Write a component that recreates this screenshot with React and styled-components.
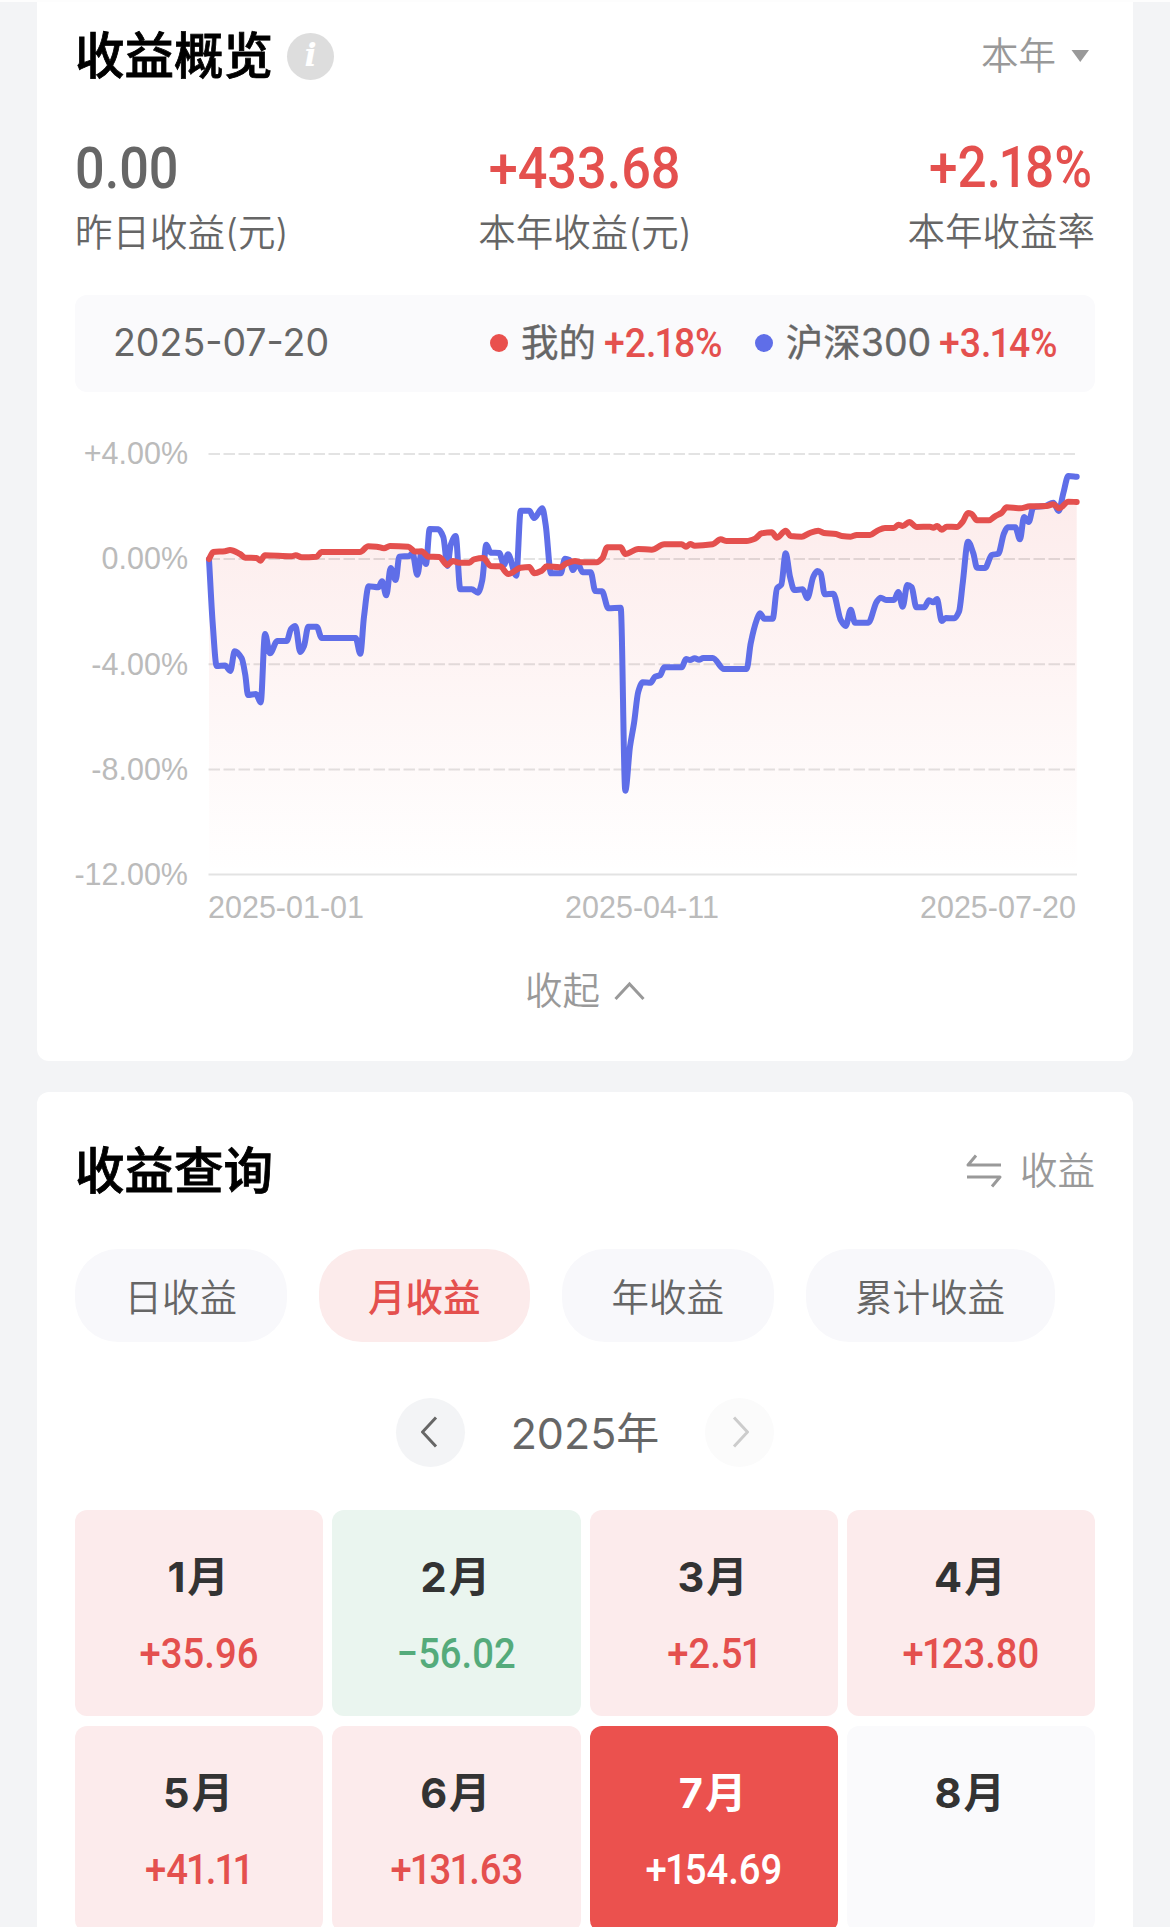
import React, { useState } from 'react'
import styled, { createGlobalStyle } from 'styled-components'

const RED = '#e4504e'
const BLUE = '#5f6ee8'
const GREEN = '#55ab7b'

const GlobalStyle = createGlobalStyle`
  * { box-sizing: border-box; }
  body {
    margin: 0;
    background: #f3f4f6;
    font-family: Inter, "Noto Sans CJK SC", sans-serif;
    color: #666;
  }
  button {
    border: 0;
    padding: 0;
    background: none;
    font: inherit;
    color: inherit;
  }
`

const Page = styled.div`
  width: 1170px;
  height: 1927px;
  overflow: hidden;
  border-top: 2px solid #fdfdfd;
  padding: 0 37px;
`

const Card = styled.section`
  background: #fff;
  padding: 0 38px;
  border-radius: ${({ $first }) => ($first ? '0 0 12px 12px' : '12px')};
  height: ${({ $first }) => ($first ? '1059px' : '900px')};
  margin-bottom: 31px;
`

const CardHeader = styled.header`
  display: flex;
  align-items: center;
  justify-content: space-between;
  height: ${({ $height }) => $height}px;
`

const Title = styled.h2`
  display: flex;
  align-items: center;
  gap: 14px;
  margin: 0;
  font-size: 49.5px;
  line-height: 60px;
  font-weight: 500;
  color: #000;
  -webkit-text-stroke: 0.8px #000;
`

const InfoBadge = styled.span`
  width: 47px;
  height: 47px;
  border-radius: 50%;
  background: #ddd;
  color: #fff;
  -webkit-text-stroke: 0;
  font: italic bold 32px/45px "DejaVu Serif", serif;
  text-align: center;
`

const HeaderAction = styled.button`
  display: flex;
  align-items: center;
  gap: ${({ $gap }) => $gap}px;
  font-size: 37.5px;
  line-height: 46px;
  font-weight: 350;
  color: #999;
`

const Stats = styled.div`
  display: grid;
  grid-template-columns: repeat(3, 1fr);
  padding-top: 28px;
`

const Stat = styled.div`
  display: flex;
  flex-direction: column;
  align-items: ${({ $align }) => $align};
`

const Digits = styled.span`
  display: inline-block;
  font-family: Roboto, sans-serif;
  font-weight: 500;
  font-size: ${({ $size }) => $size}px;
  line-height: ${({ $size }) => $size + 2}px;
  color: ${({ $color }) => $color};
  transform: scaleX(0.9);
  transform-origin: ${({ $origin = 'center' }) => $origin};
`

const RateDigits = styled(Digits)`
  margin-right: 3px;
`

const LegendDigits = styled(Digits)`
  margin-right: -13px;
`

const One = styled.span`
  margin: 0 -0.05em;
`

const StatLabel = styled.span`
  margin-top: 12px;
  font-size: 37.5px;
  line-height: 46px;
  font-weight: 350;
`

const Legend = styled.div`
  display: flex;
  align-items: center;
  margin-top: 39px;
  height: 97px;
  padding: 0 37px 2px 38px;
  border-radius: 12px;
  background: #fafafc;
  font-size: 37.5px;
  line-height: 46px;
`

const LegendDate = styled.span`
  flex: 1;
`

const LegendItem = styled.span`
  display: flex;
  align-items: center;
  margin-left: 32px;
`

const Dot = styled.i`
  width: 18px;
  height: 18px;
  margin-right: 13px;
  border-radius: 50%;
  background: ${({ $color }) => $color};
`

const LegendName = styled.span`
  margin-right: 8px;
  -webkit-text-stroke: 0.3px #666;
`

const Chart = styled.div`
  display: grid;
  grid-template-columns: 113px 868px;
  column-gap: 20px;
  margin-top: 47px;
  font: 30.5px/30px "Liberation Sans", Arial, sans-serif;
  color: #bbb;
`

const YAxis = styled.div`
  display: flex;
  flex-direction: column;
  justify-content: space-between;
  align-items: flex-end;
  height: 451px;
  margin-top: -1px;
`

const XAxis = styled.div`
  grid-column: 2;
  display: flex;
  justify-content: space-between;
  margin-top: 2px;
`

const Plot = styled.svg`
  display: block;
  overflow: visible;
`

const Collapse = styled.button`
  display: flex;
  align-items: center;
  gap: 14px;
  margin: 46px auto 0;
  font-size: 37.5px;
  line-height: 46px;
  font-weight: 350;
  color: #999;
`

const Tabs = styled.div`
  display: flex;
  gap: 32px;
`

const Tab = styled.button`
  height: 93px;
  padding: 0 49.5px 3px;
  border-radius: 43px;
  font-size: 37.5px;
  font-weight: ${({ $active }) => ($active ? 500 : 350)};
  color: ${({ $active }) => ($active ? RED : '#666')};
  background: ${({ $active }) => ($active ? '#fcebeb' : '#f8f8fb')};
`

const YearNav = styled.div`
  display: flex;
  align-items: center;
  justify-content: center;
  gap: 46px;
  margin-top: 55px;
  height: 70px;
  font-size: 43px;
`

const Year = styled.span`
  padding-bottom: 5px;
`

const YearButton = styled.button`
  display: flex;
  align-items: center;
  justify-content: center;
  width: 69px;
  height: 69px;
  border-radius: 50%;
  color: ${({ disabled }) => (disabled ? '#ccc' : '#666')};
  background: ${({ disabled }) => (disabled ? '#fbfbfb' : '#f3f4f6')};
`

const Months = styled.div`
  display: grid;
  grid-template-columns: repeat(4, 1fr);
  gap: 10px 9px;
  margin-top: 43px;
`

const tones = {
  up: { bg: '#fcebec', title: '#333', value: RED },
  down: { bg: '#eaf5ef', title: '#333', value: GREEN },
  current: { bg: '#eb514e', title: '#fff', value: '#fff' },
  none: { bg: '#fafafc', title: '#333', value: '#333' },
}

const MonthCell = styled.div`
  display: flex;
  flex-direction: column;
  align-items: center;
  height: 206px;
  padding-top: 41px;
  border-radius: 12px;
  background: ${({ $tone }) => tones[$tone].bg};
`

const MonthName = styled.span`
  margin-bottom: 28px;
  font-size: 41.5px;
  line-height: 53px;
  letter-spacing: 2px;
  font-weight: 700;
  color: ${({ $tone }) => tones[$tone].title};
`

const redLine = [
  [209, 559], [213.3, 552], [225, 551.3], [230, 550], [240, 554], [245.3, 557.7], [256.7, 558], [260.3, 560.7],
  [265, 555.3], [291.7, 556.3], [295.7, 555.3], [301.7, 557.3], [316.7, 556.7], [321.3, 552], [360, 552],
  [368.3, 546.3], [376.7, 546.7], [384, 548.3], [390, 546], [408.3, 546.7], [415, 551.5], [421.7, 551.3],
  [428.3, 556.7], [439.3, 557], [447.3, 565], [452.7, 561], [459.3, 562.7], [469.3, 562.7], [474, 559.3],
  [483.3, 558], [490.7, 566], [500, 566.3], [508.3, 574], [520.7, 567.7], [529.3, 567], [534.3, 573.3],
  [541.7, 570.7], [546.7, 566.3], [560, 567.3], [566.7, 563.3], [575, 561], [581.7, 562.3], [596.7, 562.3],
  [602.3, 558.3], [607.3, 547.3], [620.7, 547.3], [625.3, 554], [638.3, 549], [651.7, 549.7], [664.3, 544.3],
  [681.7, 544.3], [686, 546.7], [690.3, 544], [694.7, 545.7], [712.7, 544.3], [720.7, 539.3], [726.7, 541],
  [746.7, 541], [755, 538.7], [761.7, 533.3], [771.7, 532.3], [777, 537.7], [785.7, 530.7], [790.7, 536],
  [801.7, 536.7], [809, 533.3], [818.3, 530.7], [824, 533], [836, 534], [841.7, 536], [850.7, 536.7],
  [856.7, 535], [870, 535], [877.3, 530.7], [885, 528], [894, 528], [898.3, 524.7], [902.7, 526], [909.3, 522],
  [916.7, 527], [930, 526.7], [933.3, 527.7], [937.3, 526], [941.7, 529.7], [946.7, 526.7], [956.7, 527],
  [962.7, 521.7], [968, 513], [971.7, 514], [977, 520.3], [989, 520.3], [995, 516.3], [1001.7, 512.7],
  [1006.7, 507.3], [1020, 508.3], [1030, 506.3], [1046.7, 506], [1053.3, 504.3], [1059.3, 508.3],
  [1068.3, 501.7], [1076.7, 502],
]

const blueLine = [
  [209, 559.3], [212.7, 623.3], [216.7, 666], [225, 665.5], [230.3, 671], [234.7, 651.3], [241.7, 658.3],
  [245.3, 675], [248, 695], [256, 694], [260.7, 702.5], [265, 634], [270, 653.3], [277.3, 641], [286.7, 641],
  [291, 629], [295.3, 626], [300.3, 652], [304, 646], [308.3, 626.7], [316.7, 626.7], [321.7, 638], [355.7, 638],
  [360.3, 653.7], [364, 616.7], [368.7, 586.3], [378.3, 587.3], [382, 581.3], [386.3, 595.3], [390.7, 568],
  [395.7, 580], [399.3, 556.7], [409.3, 556], [412.5, 553], [417.3, 574.7], [421.7, 552], [426, 564],
  [429.7, 529], [438.3, 529.3], [443.3, 537], [447.5, 566], [450.7, 545], [455.7, 536], [460.3, 589.3],
  [471.7, 589.3], [478, 592.7], [482.3, 580], [486.3, 544.7], [490.7, 552.7], [499.3, 553], [504, 565],
  [508, 554.3], [516.3, 575.7], [520.7, 510.7], [529.3, 510.7], [534, 518], [542.3, 508.3], [545.7, 525],
  [551, 573.3], [560.7, 573.3], [565, 558.7], [569.3, 560], [573, 570], [577.3, 562.7], [582.7, 572.3],
  [590.7, 572.3], [595.3, 591], [602, 591.3], [608.3, 608.3], [620.7, 607.7], [625.3, 790.7], [630, 746.7],
  [634, 723.3], [638.3, 691.7], [642.7, 682.3], [650.7, 682.7], [655, 676.7], [660, 675.3], [664.3, 667.3],
  [681.7, 667.3], [686, 659], [690, 660], [694.7, 658.3], [699, 659.7], [703.3, 658], [712.7, 658], [724, 669],
  [746.7, 669], [750.7, 643.3], [756.7, 620], [760, 613.3], [764.3, 618.7], [772.7, 618.7], [777, 588.3],
  [781.3, 584.7], [785.7, 553.3], [790, 576.7], [794.3, 590], [802.7, 589.3], [807.3, 598.3], [813.3, 576.7],
  [817.3, 571], [820.7, 573.3], [824.7, 594.3], [833.3, 593.7], [840.7, 620], [845.7, 626], [850.7, 609.7],
  [855, 622.7], [868.3, 622.7], [876.7, 601.7], [880.7, 597.7], [886, 600], [894, 600], [898.3, 592],
  [902.7, 606.7], [907.3, 585], [911.7, 587.3], [916.3, 607.3], [924.3, 607.3], [929, 600.3], [933.3, 602.3],
  [937, 599], [941.7, 621], [945.7, 618], [954.3, 618.3], [959, 611.7], [962.7, 583.3], [968, 541.7],
  [973.3, 553.3], [977, 567.7], [985, 568], [991.7, 555], [998.3, 553.7], [1004, 533.3], [1007.7, 527.3],
  [1015.3, 527.3], [1020, 539.3], [1024, 517], [1028.7, 522], [1033.3, 507.3], [1045, 506], [1053.3, 502.7],
  [1058.7, 511], [1063.3, 493.3], [1068.3, 476], [1076.7, 476.7],
]

// monotone cubic through the points, so flat runs stay flat
function smooth(points) {
  const n = points.length
  const slope = points.slice(1).map(([x, y], i) => (y - points[i][1]) / (x - points[i][0]))
  const tangent = points.map((p, i) => {
    if (i === 0) return slope[0]
    if (i === n - 1) return slope[n - 2]
    const a = slope[i - 1]
    const b = slope[i]
    return a * b <= 0 ? 0 : (2 * a * b) / (a + b)
  })
  let d = `M${points[0][0]},${points[0][1]}`
  for (let i = 1; i < n; i++) {
    const [x0, y0] = points[i - 1]
    const [x1, y1] = points[i]
    const h = (x1 - x0) / 3
    d += `C${x0 + h},${y0 + tangent[i - 1] * h} ${x1 - h},${y1 - tangent[i] * h} ${x1},${y1}`
  }
  return d
}

// the 1 takes less room than the other digits
function narrowOnes(text) {
  return text.split('').map((c, i) => (c === '1' ? <One key={i}>1</One> : c))
}

function ProfitChart() {
  const red = smooth(redLine)
  return (
    <Chart>
      <YAxis>
        {['+4.00%', '0.00%', '-4.00%', '-8.00%', '-12.00%'].map(t => <span key={t}>{t}</span>)}
      </YAxis>
      <Plot width="868" height="451" viewBox="208 439 868 451">
        <defs>
          <linearGradient id="fade" gradientUnits="userSpaceOnUse" x1="0" y1="500" x2="0" y2="875">
            <stop offset="0" stopColor="#eb514e" stopOpacity="0.11" />
            <stop offset="0.5" stopColor="#eb514e" stopOpacity="0.055" />
            <stop offset="1" stopColor="#eb514e" stopOpacity="0" />
          </linearGradient>
        </defs>
        <path d={`${red}V875H209Z`} fill="url(#fade)" />
        <g stroke="#000" strokeOpacity="0.11" strokeWidth="2">
          {[454, 559, 664.3, 769.5].map(y => (
            <line key={y} x1="208.5" x2="1077" y1={y} y2={y} strokeDasharray="11.5 3.5" />
          ))}
          <line x1="208.5" x2="1077" y1="874.5" y2="874.5" />
        </g>
        <g fill="none" strokeWidth="6" strokeLinecap="round" strokeLinejoin="round">
          <path d={smooth(blueLine)} stroke={BLUE} />
          <path d={red} stroke={RED} />
        </g>
      </Plot>
      <XAxis>
        <span>2025-01-01</span>
        <span>2025-04-11</span>
        <span>2025-07-20</span>
      </XAxis>
    </Chart>
  )
}

const months = [
  { name: '1月', value: '+35.96', tone: 'up' },
  { name: '2月', value: '−56.02', tone: 'down' },
  { name: '3月', value: '+2.51', tone: 'up' },
  { name: '4月', value: '+123.80', tone: 'up' },
  { name: '5月', value: '+41.11', tone: 'up' },
  { name: '6月', value: '+131.63', tone: 'up' },
  { name: '7月', value: '+154.69', tone: 'current' },
  { name: '8月', value: '', tone: 'none' },
]

const tabs = ['日收益', '月收益', '年收益', '累计收益']

export default function App() {
  const [tab, setTab] = useState('月收益')

  return (
    <Page>
      <GlobalStyle />
      <Card $first>
        <CardHeader $height={108}>
          <Title>收益概览<InfoBadge>i</InfoBadge></Title>
          <HeaderAction $gap={14}>
            本年
            <svg width="25" height="14" viewBox="0 0 25 14"><path d="M1.5 1h17.5l-8.75 12z" fill="#999" /></svg>
          </HeaderAction>
        </CardHeader>

        <Stats>
          <Stat $align="flex-start">
            <Digits $size={58} $origin="left" $color="#666">0.00</Digits>
            <StatLabel>昨日收益(元)</StatLabel>
          </Stat>
          <Stat $align="center">
            <Digits $size={58} $color={RED}>+433.68</Digits>
            <StatLabel>本年收益(元)</StatLabel>
          </Stat>
          <Stat $align="flex-end">
            <RateDigits $size={57} $origin="right" $color={RED}>{narrowOnes('+2.18%')}</RateDigits>
            <StatLabel>本年收益率</StatLabel>
          </Stat>
        </Stats>

        <Legend>
          <LegendDate>2025-07-20</LegendDate>
          <LegendItem>
            <Dot $color="#e9504d" />
            <LegendName>我的</LegendName>
            <LegendDigits $size={41.5} $origin="left" $color={RED}>{narrowOnes('+2.18%')}</LegendDigits>
          </LegendItem>
          <LegendItem>
            <Dot $color={BLUE} />
            <LegendName>沪深300</LegendName>
            <LegendDigits $size={41.5} $origin="left" $color={RED}>{narrowOnes('+3.14%')}</LegendDigits>
          </LegendItem>
        </Legend>

        <ProfitChart />

        <Collapse>
          收起
          <svg width="31" height="20" viewBox="0 0 31 20" fill="none" stroke="#999" strokeWidth="3">
            <path d="M1.5 18L15.5 3l14 15" />
          </svg>
        </Collapse>
      </Card>

      <Card>
        <CardHeader $height={157}>
          <Title>收益查询</Title>
          <HeaderAction $gap={18}>
            <svg width="36" height="34" viewBox="0 0 36 34" fill="none" stroke="#999" strokeWidth="3" strokeLinejoin="round">
              <path d="M35 11H2l8-9.5M1 23h33l-8 9.5" />
            </svg>
            收益
          </HeaderAction>
        </CardHeader>

        <Tabs>
          {tabs.map(t => (
            <Tab key={t} $active={t === tab} onClick={() => setTab(t)}>{t}</Tab>
          ))}
        </Tabs>

        <YearNav>
          <YearButton>
            <svg width="18" height="32" viewBox="0 0 18 32" fill="none" stroke="currentColor" strokeWidth="3">
              <path d="M15 1.5L1.5 16 15 30.5" />
            </svg>
          </YearButton>
          <Year>2025年</Year>
          <YearButton disabled>
            <svg width="18" height="32" viewBox="0 0 18 32" fill="none" stroke="currentColor" strokeWidth="3">
              <path d="M3 1.5L16.5 16 3 30.5" />
            </svg>
          </YearButton>
        </YearNav>

        <Months>
          {months.map(m => (
            <MonthCell key={m.name} $tone={m.tone}>
              <MonthName $tone={m.tone}>{m.name}</MonthName>
              <Digits $size={42.5} $color={tones[m.tone].value}>{narrowOnes(m.value)}</Digits>
            </MonthCell>
          ))}
        </Months>
      </Card>
    </Page>
  )
}
